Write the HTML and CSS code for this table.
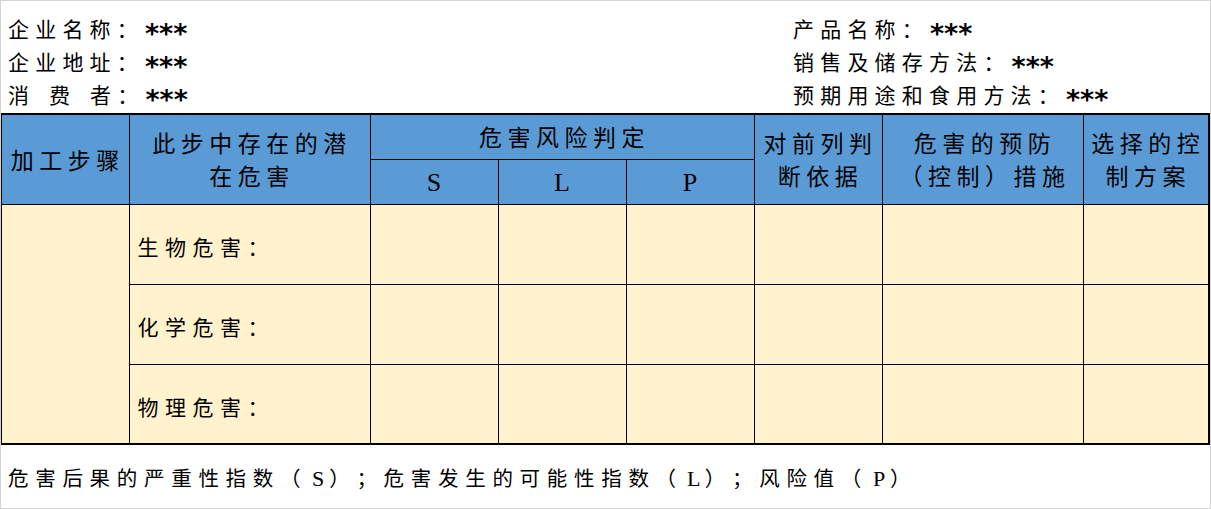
FILE: index.html
```html
<!DOCTYPE html>
<html lang="zh">
<head>
<meta charset="utf-8">
<title>危害分析表</title>
<link rel="stylesheet" href="styles.css">
</head>
<body>
<div class="page">
  <div class="info">
    <div class="info-col">
      <div class="line">企业名称：<span class="stars">***</span></div>
      <div class="line">企业地址：<span class="stars">***</span></div>
      <div class="line"><span class="wide">消费</span>者：<span class="stars">***</span></div>
    </div>
    <div class="info-col">
      <div class="line">产品名称：<span class="stars">***</span></div>
      <div class="line">销售及储存方法：<span class="stars">***</span></div>
      <div class="line">预期用途和食用方法：<span class="stars">***</span></div>
    </div>
  </div>
  <table class="haccp">
    <colgroup>
      <col class="c-step">
      <col class="c-hazard">
      <col class="c-slp">
      <col class="c-slp">
      <col class="c-slp">
      <col class="c-basis">
      <col class="c-measure">
      <col class="c-plan">
    </colgroup>
    <thead>
      <tr class="h1">
        <th rowspan="2">加工步骤</th>
        <th rowspan="2">此步中存在的潜<br>在危害</th>
        <th colspan="3">危害风险判定</th>
        <th rowspan="2">对前列判<br>断依据</th>
        <th rowspan="2">危害的预防<br>（控制）措施</th>
        <th rowspan="2">选择的控<br>制方案</th>
      </tr>
      <tr class="h2">
        <th class="latin">S</th>
        <th class="latin">L</th>
        <th class="latin">P</th>
      </tr>
    </thead>
    <tbody>
      <tr class="body-row">
        <td rowspan="3"></td>
        <td class="hazard">生物危害：</td>
        <td></td><td></td><td></td><td></td><td></td><td></td>
      </tr>
      <tr class="body-row">
        <td class="hazard">化学危害：</td>
        <td></td><td></td><td></td><td></td><td></td><td></td>
      </tr>
      <tr class="body-row">
        <td class="hazard">物理危害：</td>
        <td></td><td></td><td></td><td></td><td></td><td></td>
      </tr>
    </tbody>
  </table>
  <p class="note">危害后果的严重性指数（<span class="lat">S</span>）；危害发生的可能性指数（<span class="lat">L</span>）；风险值（<span class="lat">P</span>）</p>
</div>
</body>
</html>
```
FILE: styles.css
```css
html, body {
  margin: 0;
  padding: 0;
  background: #ffffff;
}

body {
  font-family: "Noto Sans CJK SC", "Noto Sans", sans-serif;
  color: #000000;
  text-spacing-trim: space-all;
  font-feature-settings: "halt" 0;
}

.page {
  width: 1211px;
  height: 509px;
  box-sizing: border-box;
  border: 1px solid #d4d4d4;
  overflow: hidden;
}

.info {
  display: grid;
  grid-template-columns: 785px 1fr;
  padding: 11px 0 0 7px;
  height: 99px;
}

.line {
  font-size: 21px;
  height: 33px;
  line-height: 33px;
  letter-spacing: 6.2px;
  white-space: nowrap;
}

.wide {
  letter-spacing: 20px;
}

.stars {
  display: inline-block;
  height: 33px;
  line-height: 44px;
  vertical-align: top;
  margin-left: 1px;
  font-family: "DejaVu Sans", sans-serif;
  font-weight: bold;
  font-size: 27px;
  letter-spacing: 0;
}

.haccp {
  border-collapse: collapse;
  table-layout: fixed;
  width: 1210px;
  margin: 2px 0 0 -1px;
  border: 2px solid #000000;
}

.c-step { width: 128px; }
.c-hazard { width: 241px; }
.c-slp { width: 128px; }
.c-basis { width: 128px; }
.c-measure { width: 201px; }
.c-plan { width: 126px; }

.haccp th,
.haccp td {
  border: 1px solid #000000;
  padding: 0;
}

.haccp th {
  background: #5b9bd5;
  font-weight: normal;
  font-size: 23px;
  line-height: 33px;
  letter-spacing: 5.5px;
  padding-left: 5px;
  text-align: center;
  vertical-align: middle;
}

.haccp .h1 { height: 45px; }
.haccp .h2 { height: 45px; }

.haccp th.latin {
  font-family: "Liberation Serif", serif;
  font-size: 26px;
  letter-spacing: 0;
  padding: 2px 0 0 0;
}

.haccp .body-row { height: 80px; }

.haccp td {
  background: #fff2cc;
}

.haccp td.hazard {
  font-size: 21px;
  line-height: 30px;
  letter-spacing: 6.5px;
  padding: 4px 0 0 8px;
  vertical-align: middle;
}

.note {
  margin: 16px 0 0 7px;
  font-size: 20.5px;
  line-height: 33px;
  letter-spacing: 6.7px;
  white-space: nowrap;
}

.note .lat {
  display: inline-block;
  width: 22px;
  text-align: center;
  letter-spacing: 0;
  font-family: "Liberation Serif", serif;
  font-size: 22px;
}
```
